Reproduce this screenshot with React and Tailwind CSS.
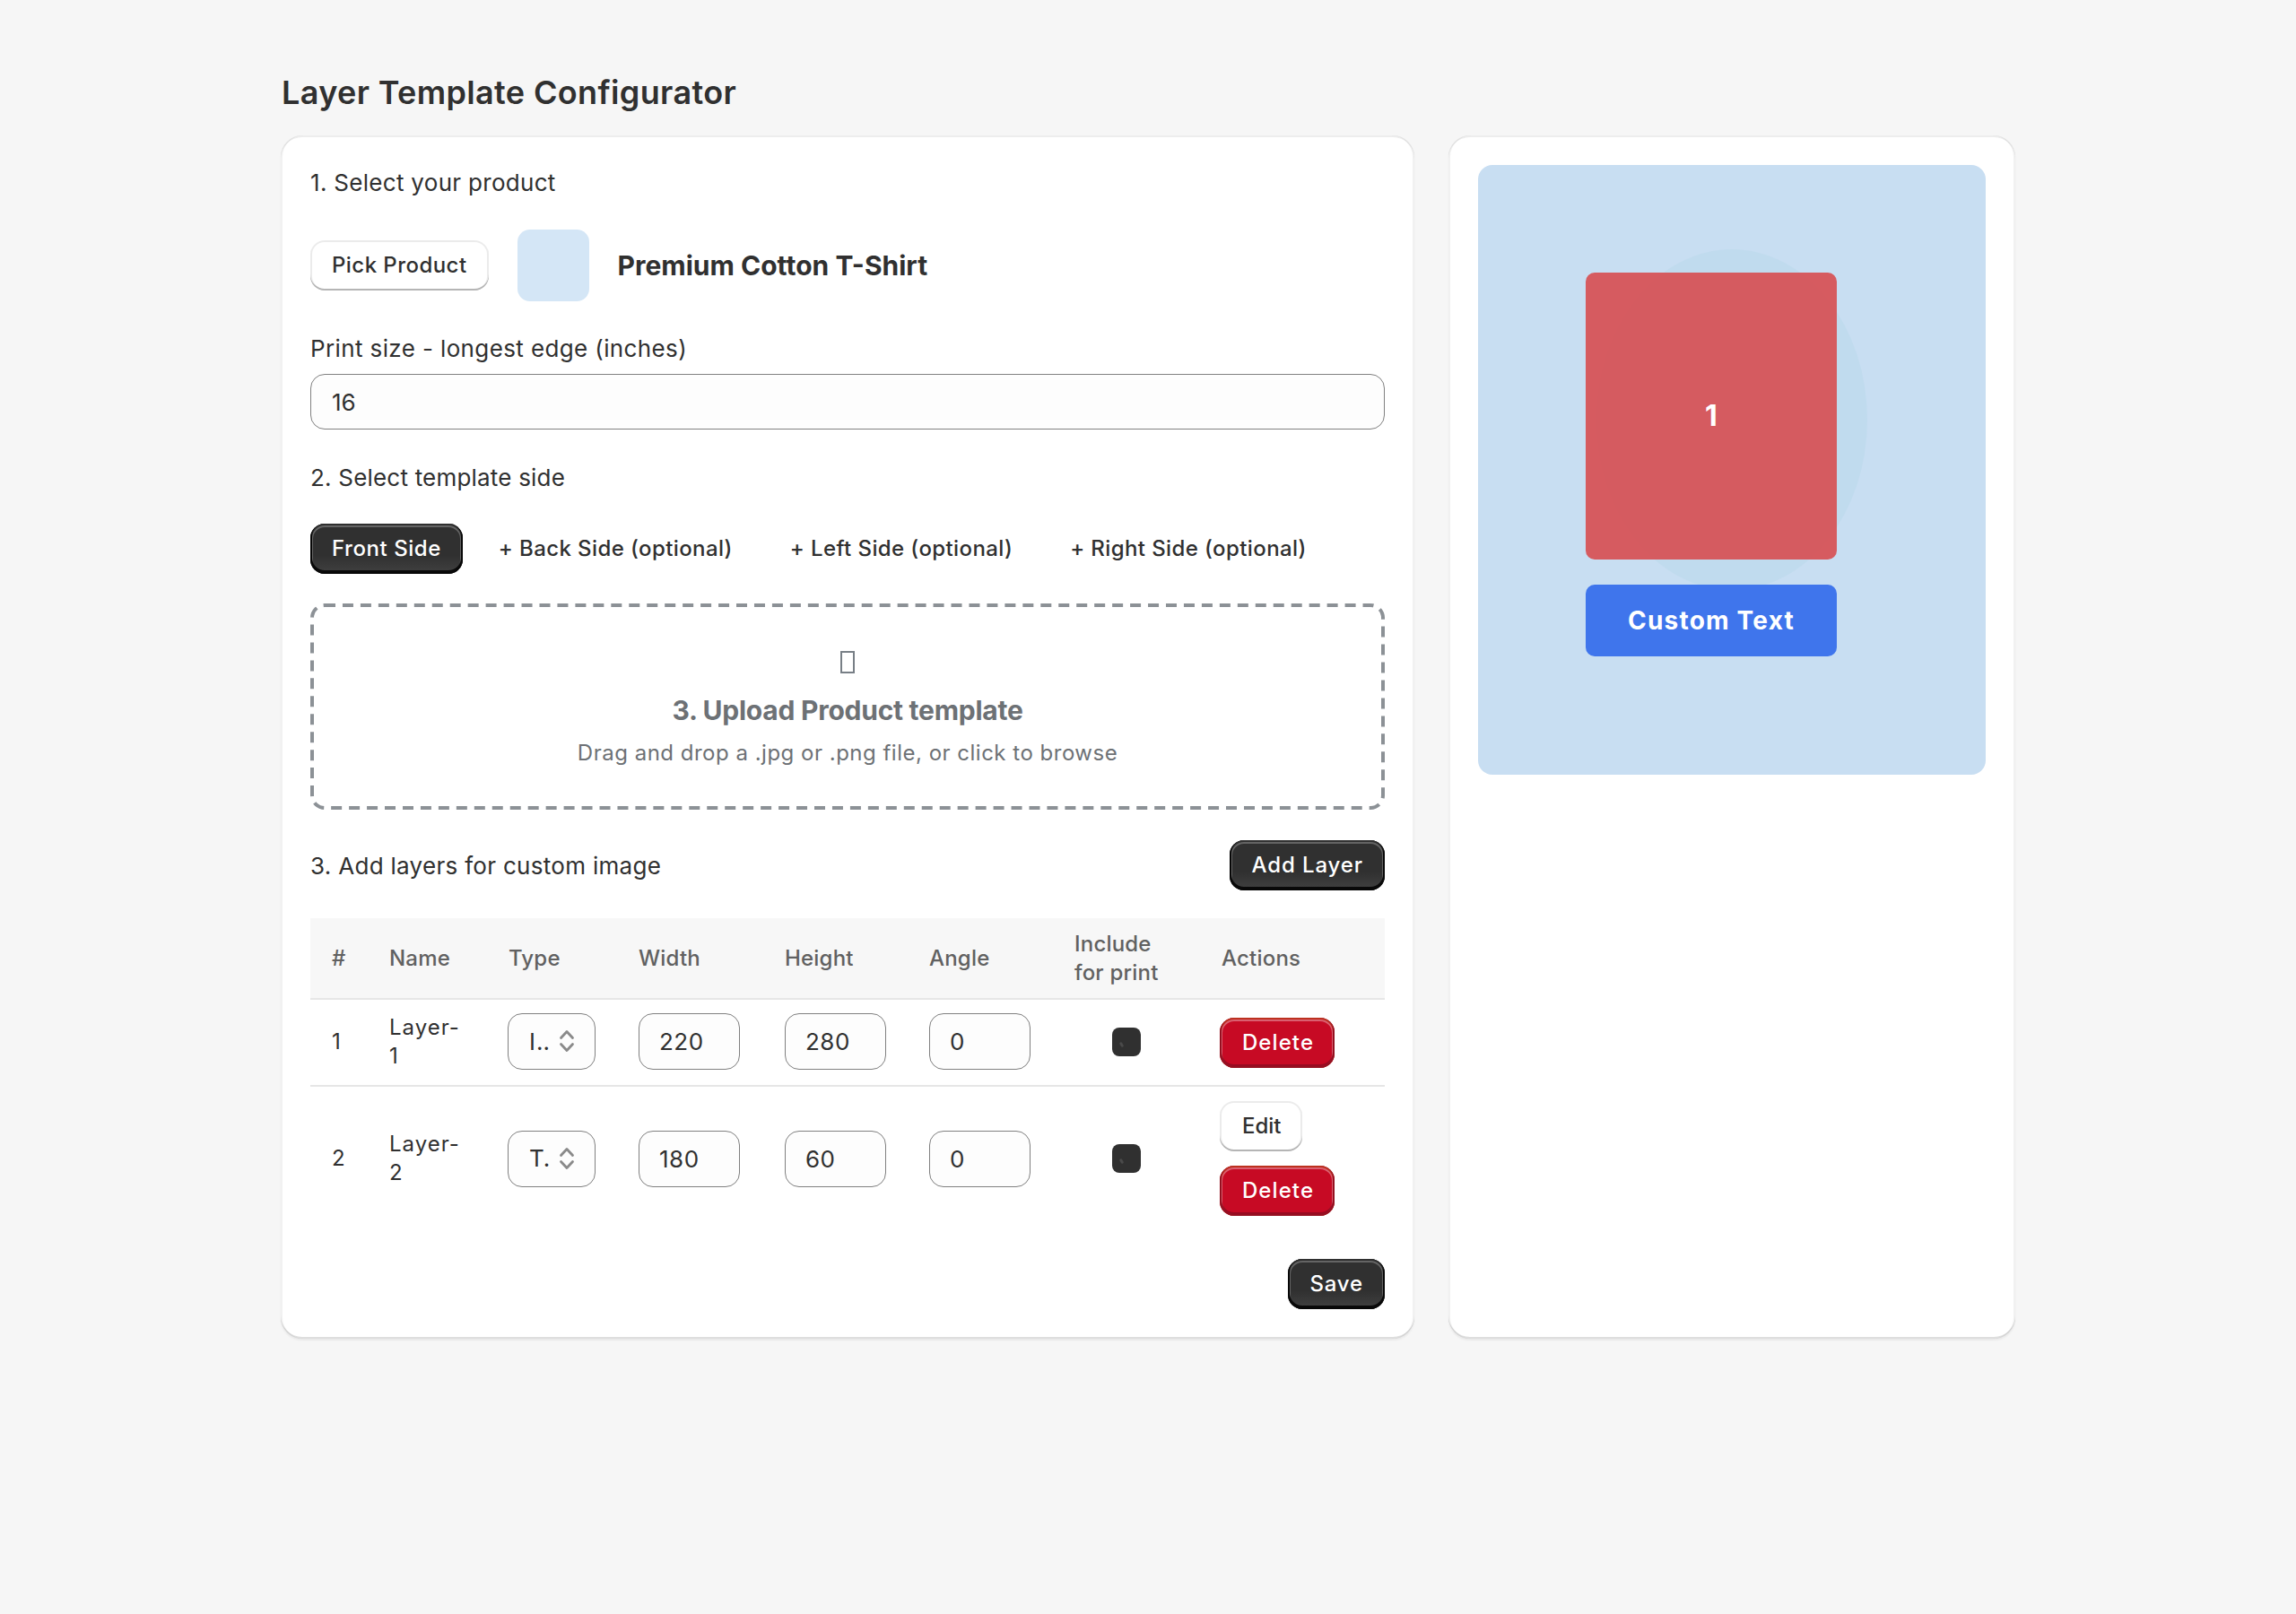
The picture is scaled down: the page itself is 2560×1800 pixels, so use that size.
import React from "react";

const darkBtn =
  "h-[56px] px-[24px] rounded-[16px] text-[24px] font-medium text-white bg-[linear-gradient(180deg,#303030_63%,#414141_100%)] shadow-[inset_0_-2px_0_2px_rgba(0,0,0,0.85),inset_0_0_0_2px_#303030,inset_0_1px_0_3px_rgba(255,255,255,0.25)] whitespace-nowrap";
const redBtn =
  "h-[56px] w-[128px] pl-[2px] rounded-[16px] text-[24px] font-medium tracking-[1.1px] text-white bg-[#c70a24] shadow-[inset_0_-2px_0_2px_rgba(142,11,33,0.85),inset_0_0_0_2px_rgba(181,38,11,0.8),inset_0_1px_0_3px_rgba(255,255,255,0.35)] whitespace-nowrap";
const whiteBtn =
  "h-[56px] px-[24px] rounded-[16px] text-[24px] font-medium text-[#303030] bg-white shadow-[inset_0_-2px_0_0_#b5b5b5,inset_0_0_0_2px_rgba(0,0,0,0.08)] whitespace-nowrap";
const ghostBtn = "h-[56px] px-[24px] text-[24px] font-medium tracking-[0.4px] whitespace-nowrap";
const numInput =
  "block w-[113px] h-[63px] pl-[22px] pr-[8px] rounded-[16px] border border-[#808080] bg-[#fdfdfd] text-[26px] tracking-[0.5px] text-[#303030] outline-none";
const th = "px-[24px] text-left align-middle text-[24px] leading-[32px] font-medium tracking-[0.2px] text-[#616161]";
const td = "px-[24px] align-middle text-[24px] leading-[32px] tracking-[1px] text-[#303030]";
const card =
  "bg-white rounded-[24px] p-[33px] shadow-[inset_2px_0_0_rgba(0,0,0,0.055),inset_-2px_0_0_rgba(0,0,0,0.055),inset_0_-2px_0_rgba(0,0,0,0.13),inset_0_2px_0_rgba(204,204,204,0.35),0_2px_2px_rgba(26,26,26,0.06)]";

function TypeSelect({ value, options }) {
  return (
    <div className="relative w-[98px] h-[63px] -ml-[1px]">
      <select
        defaultValue={value}
        className="block w-full h-full appearance-none rounded-[16px] border border-[#808080] bg-[#fdfdfd] pl-[23px] pr-[50px] text-[26px] text-[#303030] outline-none text-ellipsis"
      >
        {options.map((o) => (
          <option key={o}>{o}</option>
        ))}
      </select>
      <svg
        className="absolute right-[23px] top-[18px] pointer-events-none"
        width="18"
        height="26"
        viewBox="0 0 18 26"
        fill="none"
        stroke="#8a8a8a"
        strokeWidth="2.8"
        strokeLinecap="round"
        strokeLinejoin="round"
      >
        <path d="M2.5 9.5 L9 2.5 L15.5 9.5" />
        <path d="M2.5 16.5 L9 23.5 L15.5 16.5" />
      </svg>
    </div>
  );
}

function Check() {
  return (
    <div className="relative w-[32px] h-[32px] mx-auto">
      <input type="checkbox" defaultChecked className="block w-full h-full appearance-none rounded-[8px] bg-[#303030]" />
      <span className="absolute left-[9px] top-[16px] w-[3px] h-[6px] rounded-full bg-[#4a4a4a] -rotate-30" />
    </div>
  );
}

function Row({ n, type, w, h, edit, last }) {
  const pad = last ? "" : " pb-[2px]";
  return (
    <tr className={last ? "" : "h-[97px] border-b-2 border-[#e6e6e6]"}>
      <td className={td + pad}>{n}</td>
      <td className={"pl-[24px] pr-[30px] align-middle text-[24px] leading-[32px] tracking-[1px] text-[#303030]" + pad}>Layer-{n}</td>
      <td className={td + pad}>
        <TypeSelect value={type} options={["Image", "Text"]} />
      </td>
      <td className={td + pad}>
        <input className={numInput} defaultValue={w} />
      </td>
      <td className={td + pad}>
        <input className={numInput} defaultValue={h} />
      </td>
      <td className={td + pad}>
        <input className={numInput} defaultValue="0" />
      </td>
      <td className={"px-[24px] align-middle" + pad}>
        <Check />
      </td>
      <td className="pl-[22px] pr-[24px] py-[16px] align-middle">
        <div className="flex flex-col items-start gap-[16px]">
          {edit && <button className={whiteBtn + " pl-[25px] pr-[23px]"}>Edit</button>}
          <button className={redBtn}>Delete</button>
        </div>
      </td>
    </tr>
  );
}

export default function App() {
  return (
    <div className="min-h-[1800px] bg-[#f6f6f6] font-['Inter',sans-serif] text-[#303030] pt-[80px]">
      <div className="w-[1934px] mx-auto">
        <h1 className="h-[46px] leading-[46px] mb-[25px] pl-[1px] text-[36px] font-semibold tracking-[0.36px]">Layer Template Configurator</h1>
        <div className="grid grid-cols-[1264px_632px] gap-[38px]">
          <div className={card}>
            <div className="h-[40px] leading-[40px] text-[26px] tracking-[0.3px]">1. Select your product</div>
            <div className="mt-[32px] flex items-center gap-[32px]">
              <button className={whiteBtn + " tracking-[0.45px]"}>Pick Product</button>
              <div className="w-[80px] h-[80px] rounded-[14px] bg-[#d4e6f6]" />
              <div className="text-[30px] font-[650]">Premium Cotton T-Shirt</div>
            </div>
            <div className="mt-[33px] h-[40px] leading-[40px] text-[26px] tracking-[0.38px]">Print size - longest edge (inches)</div>
            <input
              className="mt-[8px] block w-full h-[62px] px-[23px] rounded-[16px] border border-[#808080] bg-[#fdfdfd] text-[26px] text-[#303030] outline-none"
              defaultValue="16"
            />
            <div className="mt-[34px] h-[40px] leading-[40px] text-[26px] tracking-[0.2px]">2. Select template side</div>
            <div className="mt-[31px] flex items-center gap-[16px]">
              <button className={darkBtn + " tracking-[0.55px]"}>Front Side</button>
              <button className={ghostBtn}>+ Back Side (optional)</button>
              <button className={ghostBtn}>+ Left Side (optional)</button>
              <button className={ghostBtn}>+ Right Side (optional)</button>
            </div>
            <div className="relative mt-[33px] h-[230px] flex flex-col items-center text-[#6d7175]">
              <div className="absolute left-0 top-0 w-[599px] h-[115px] rounded-[8px] border-2 border-dashed border-[#8c9196] origin-top-left scale-[2]" />
              <div className="mt-[53px] w-[16px] h-[25px] border-2 border-[#787f86]" />
              <div className="mt-[21px] h-[40px] leading-[40px] text-[30px] font-[650] tracking-[-0.25px]">3. Upload Product template</div>
              <div className="mt-[8px] h-[40px] leading-[40px] text-[24px] tracking-[0.5px]">Drag and drop a .jpg or .png file, or click to browse</div>
            </div>
            <div className="mt-[34px] flex items-center justify-between">
              <div className="text-[26px] tracking-[0.3px]">3. Add layers for custom image</div>
              <button className={darkBtn + " tracking-[0.9px]"}>Add Layer</button>
            </div>
            <table className="mt-[31px] w-full table-fixed border-collapse">
              <colgroup>
                <col className="w-[64px]" />
                <col className="w-[133px]" />
                <col className="w-[145px]" />
                <col className="w-[163px]" />
                <col className="w-[161px]" />
                <col className="w-[162px]" />
                <col className="w-[164px]" />
                <col className="w-[206px]" />
              </colgroup>
              <thead>
                <tr className="h-[90px] bg-[#f7f7f7] border-b-2 border-[#e6e6e6]">
                  <th className={th}>#</th>
                  <th className={th}>Name</th>
                  <th className={th}>Type</th>
                  <th className={th}>Width</th>
                  <th className={th}>Height</th>
                  <th className={th}>Angle</th>
                  <th className={th}>Include for print</th>
                  <th className={th}>Actions</th>
                </tr>
              </thead>
              <tbody>
                <Row n={1} type="Image" w="220" h="280" />
                <Row n={2} type="Text" w="180" h="60" edit last />
              </tbody>
            </table>
            <div className="mt-[32px] flex justify-end">
              <button className={darkBtn + " tracking-[0.85px]"}>Save</button>
            </div>
          </div>
          <div className={card}>
            <div className="relative h-[680px] rounded-[16px] bg-[#c8def2] overflow-hidden">
              <div className="absolute left-[132px] top-[94px] w-[302px] h-[380px] rounded-[50%] bg-[#c0dbee]" />
              <div className="absolute left-[120px] top-[120px] w-[280px] h-[320px] rounded-[10px] bg-[rgba(216,68,70,0.85)] flex items-center justify-center text-white text-[32px] font-bold">
                1
              </div>
              <div className="absolute left-[120px] top-[468px] w-[280px] h-[80px] rounded-[10px] bg-[#3f75ec] flex items-center justify-center text-white text-[28px] font-bold tracking-[1.2px]">
                Custom Text
              </div>
            </div>
          </div>
        </div>
      </div>
    </div>
  );
}
